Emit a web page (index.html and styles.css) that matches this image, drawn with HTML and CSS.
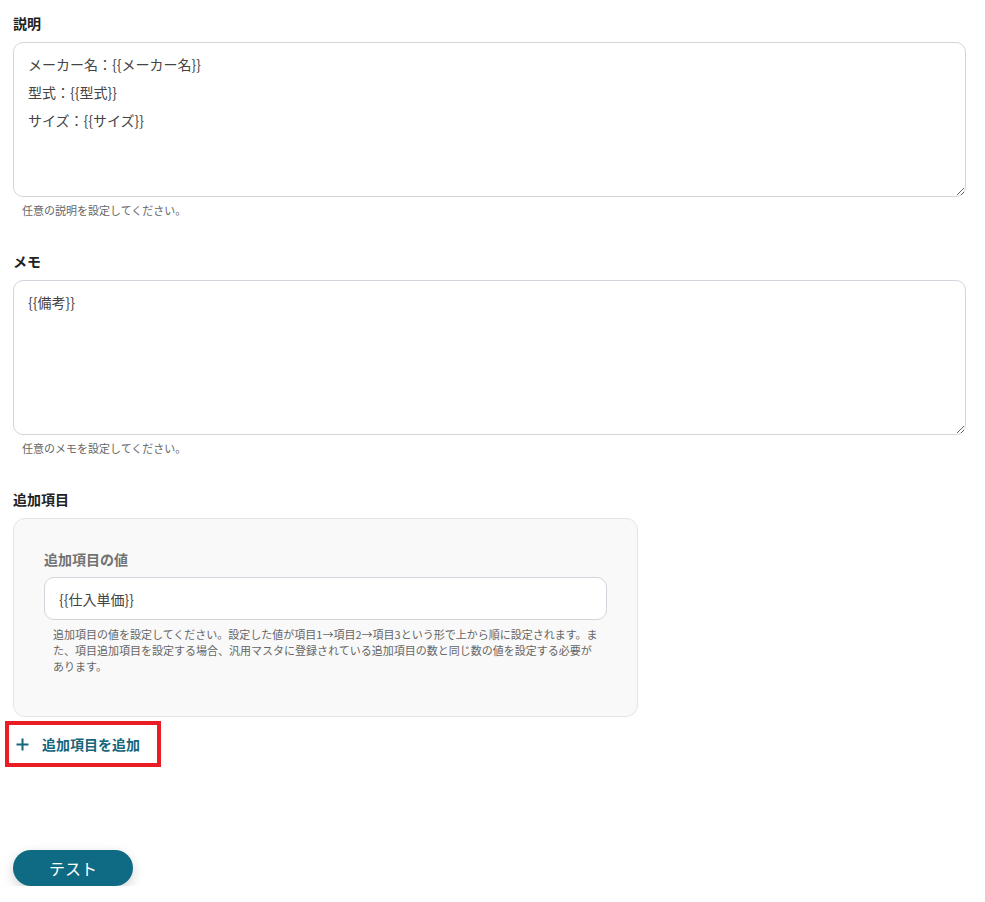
FILE: index.html
```html
<!DOCTYPE html>
<html lang="ja">
<head>
<meta charset="utf-8">
<title>Form</title>
<link rel="stylesheet" href="styles.css">
</head>
<body>
<div class="page">
  <div class="field">
    <div class="label">説明</div>
    <textarea class="area">メーカー名：{{メーカー名}}
型式：{{型式}}
サイズ：{{サイズ}}</textarea>
    <div class="help">任意の説明を設定してください。</div>
  </div>
  <div class="field">
    <div class="label">メモ</div>
    <textarea class="area">{{備考}}</textarea>
    <div class="help">任意のメモを設定してください。</div>
  </div>
  <div class="field">
    <div class="label">追加項目</div>
    <div class="box">
      <div class="sublabel">追加項目の値</div>
      <input class="input" type="text" value="{{仕入単価}}">
      <div class="subhelp">追加項目の値を設定してください。設定した値が項目1→項目2→項目3という形で上から順に設定されます。ま<br>た、項目追加項目を設定する場合、汎用マスタに登録されている追加項目の数と同じ数の値を設定する必要が<br>あります。</div>
    </div>
    <div class="highlight">
      <button class="add" type="button">
        <svg class="plus" width="13" height="13" viewBox="0 0 13 13"><path d="M6.5 0.5v12M0.5 6.5h12" stroke="#15657b" stroke-width="2" fill="none"/></svg>
        <span>追加項目を追加</span>
      </button>
    </div>
  </div>
  <button class="test" type="button">テスト</button>
</div>
</body>
</html>
```
FILE: styles.css
```css
* { box-sizing: border-box; }
body {
  margin: 0;
  background: #ffffff;
  font-family: "Noto Sans CJK JP", "Noto Sans", sans-serif;
  color: #333;
}
.page {
  padding: 13px 19px 0 13px;
  display: flex;
  flex-direction: column;
  align-items: flex-start;
}
.field {
  width: 100%;
  display: flex;
  flex-direction: column;
  margin-bottom: 33px;
}
.label {
  font-size: 14px;
  font-weight: 700;
  line-height: 20px;
  color: #222;
  margin-bottom: 9px;
}
.area {
  display: block;
  width: 100%;
  height: 155px;
  border: 1px solid #d2d5db;
  border-radius: 10px;
  padding: 7px 14px;
  font-family: "Noto Sans CJK JP", sans-serif;
  font-size: 14px;
  line-height: 28px;
  color: #444;
  background: #fff;
  resize: vertical;
  outline: none;
  margin: 0;
}
.help {
  font-size: 11px;
  line-height: 16px;
  color: #666;
  padding-left: 9px;
  margin-top: 5px;
}
.box {
  width: 625px;
  background: #f9f9f9;
  border: 1px solid #e4e4e4;
  border-radius: 12px;
  padding: 30px 30px 42px 30px;
  display: flex;
  flex-direction: column;
}
.sublabel {
  font-size: 14px;
  font-weight: 700;
  line-height: 20px;
  color: #727272;
  margin-bottom: 8px;
}
.input {
  display: block;
  width: 100%;
  height: 43px;
  border: 1px solid #d2d5db;
  border-radius: 10px;
  background: #fff;
  padding: 0 14px;
  font-family: "Noto Sans CJK JP", sans-serif;
  font-size: 14px;
  color: #444;
  outline: none;
}
.subhelp {
  font-size: 11px;
  line-height: 16px;
  color: #666;
  padding-left: 9px;
  margin-top: 6px;
  white-space: nowrap;
}
.highlight {
  margin-top: 4px;
  margin-left: -8px;
  align-self: flex-start;
  border: 4px solid #ea1c24;
  width: 156px;
  height: 46px;
}
.add {
  display: flex;
  align-items: center;
  gap: 13px;
  height: 100%;
  padding: 0 0 0 7px;
  border: none;
  background: transparent;
  font-family: "Noto Sans CJK JP", sans-serif;
  font-size: 14px;
  font-weight: 700;
  color: #15657b;
  cursor: pointer;
}
.plus { display: block; }
.test {
  margin-top: 50px;
  width: 120px;
  height: 36px;
  border: none;
  border-radius: 18px;
  background: #0f6a83;
  color: #fff;
  font-family: "Noto Sans CJK JP", sans-serif;
  font-size: 16px;
  box-shadow: 0 4px 12px rgba(0, 0, 0, 0.18);
  cursor: pointer;
}
```
